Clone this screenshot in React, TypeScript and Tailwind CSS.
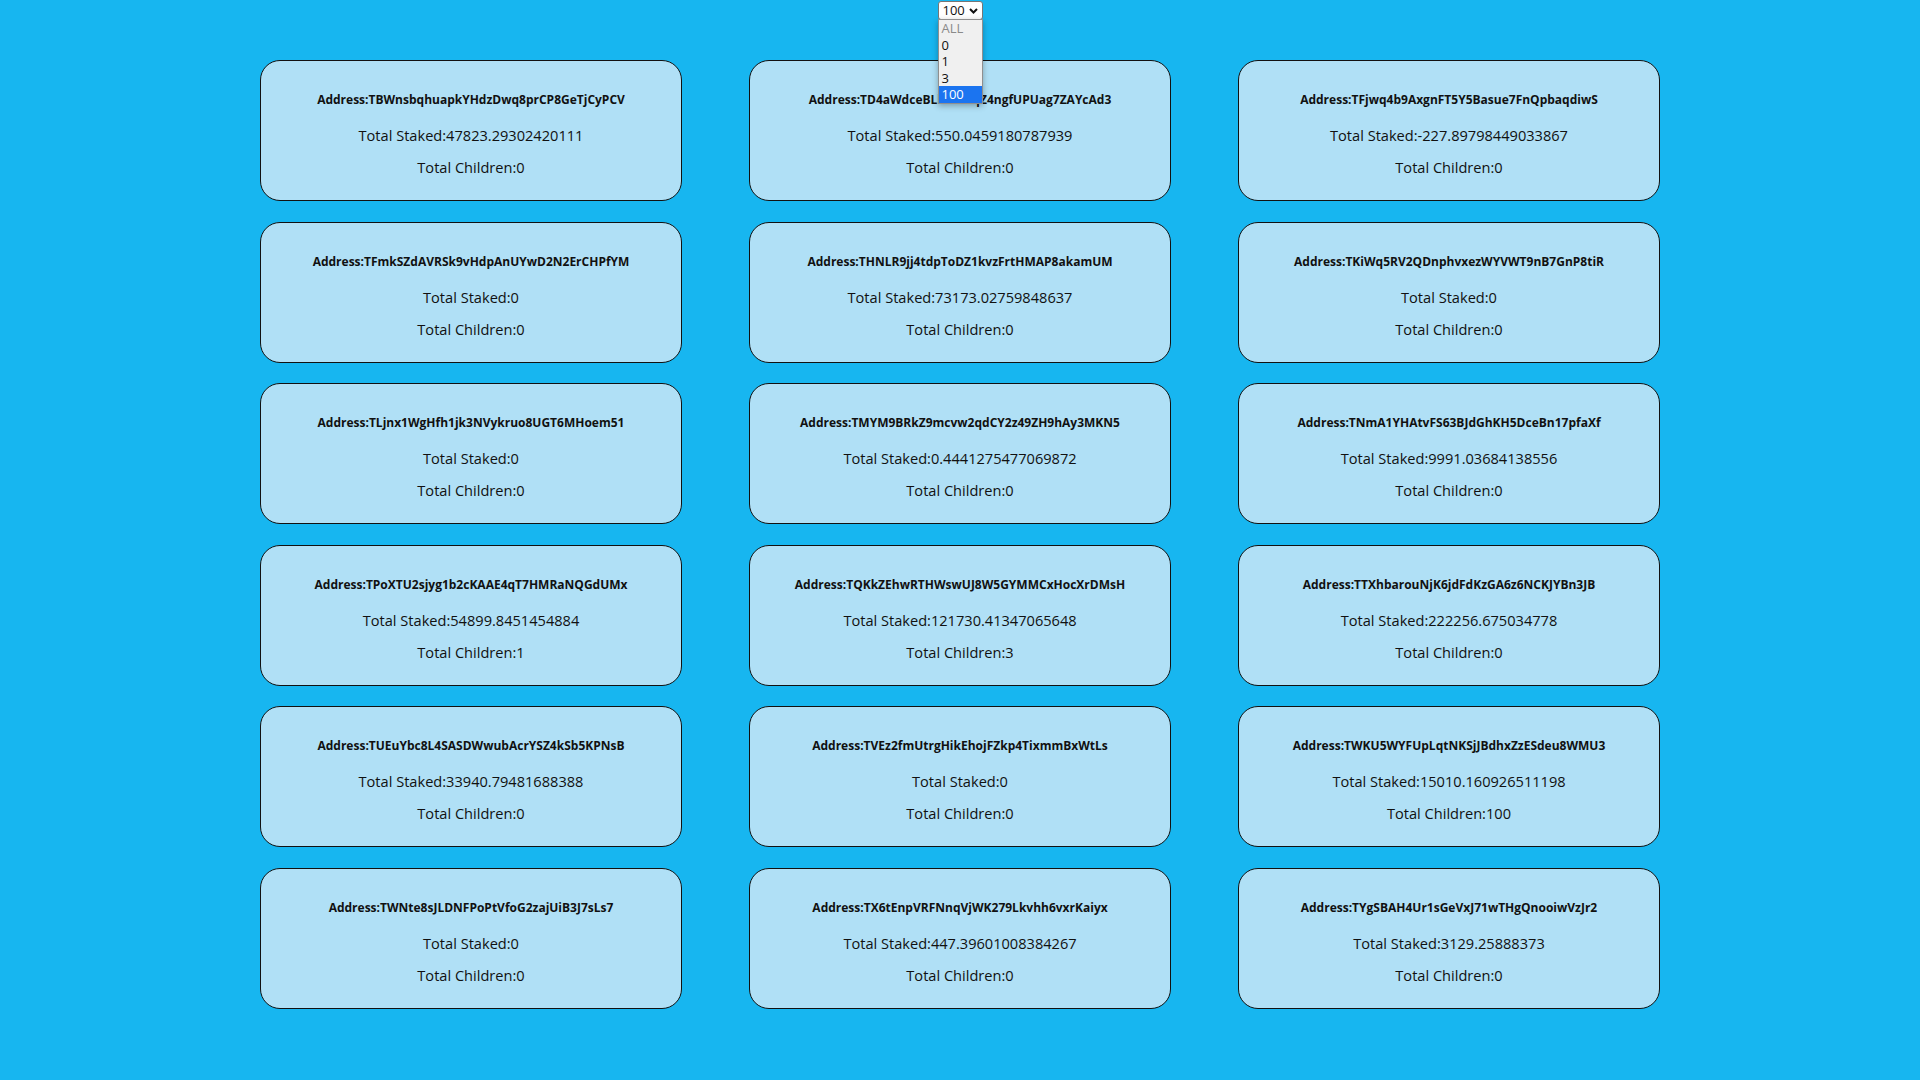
import { useState } from 'react';

interface Staker {
  address: string;
  staked: string;
  children: number;
}

const stakers: Staker[] = [
  { address: 'TBWnsbqhuapkYHdzDwq8prCP8GeTjCyPCV', staked: '47823.29302420111', children: 0 },
  { address: 'TD4aWdceBLk7Rs2qZ4ngfUPUag7ZAYcAd3', staked: '550.0459180787939', children: 0 },
  { address: 'TFjwq4b9AxgnFT5Y5Basue7FnQpbaqdiwS', staked: '-227.89798449033867', children: 0 },
  { address: 'TFmkSZdAVRSk9vHdpAnUYwD2N2ErCHPfYM', staked: '0', children: 0 },
  { address: 'THNLR9jj4tdpToDZ1kvzFrtHMAP8akamUM', staked: '73173.02759848637', children: 0 },
  { address: 'TKiWq5RV2QDnphvxezWYVWT9nB7GnP8tiR', staked: '0', children: 0 },
  { address: 'TLjnx1WgHfh1jk3NVykruo8UGT6MHoem51', staked: '0', children: 0 },
  { address: 'TMYM9BRkZ9mcvw2qdCY2z49ZH9hAy3MKN5', staked: '0.4441275477069872', children: 0 },
  { address: 'TNmA1YHAtvFS63BJdGhKH5DceBn17pfaXf', staked: '9991.03684138556', children: 0 },
  { address: 'TPoXTU2sjyg1b2cKAAE4qT7HMRaNQGdUMx', staked: '54899.8451454884', children: 1 },
  { address: 'TQKkZEhwRTHWswUJ8W5GYMMCxHocXrDMsH', staked: '121730.41347065648', children: 3 },
  { address: 'TTXhbarouNjK6jdFdKzGA6z6NCKJYBn3JB', staked: '222256.675034778', children: 0 },
  { address: 'TUEuYbc8L4SASDWwubAcrYSZ4kSb5KPNsB', staked: '33940.79481688388', children: 0 },
  { address: 'TVEz2fmUtrgHikEhojFZkp4TixmmBxWtLs', staked: '0', children: 0 },
  { address: 'TWKU5WYFUpLqtNKSjJBdhxZzESdeu8WMU3', staked: '15010.160926511198', children: 100 },
  { address: 'TWNte8sJLDNFPoPtVfoG2zajUiB3J7sLs7', staked: '0', children: 0 },
  { address: 'TX6tEnpVRFNnqVjWK279Lkvhh6vxrKaiyx', staked: '447.39601008384267', children: 0 },
  { address: 'TYgSBAH4Ur1sGeVxJ71wTHgQnooiwVzJr2', staked: '3129.25888373', children: 0 },
];

const options = ['ALL', '0', '1', '3', '100'];

function StakerCard({ staker }: { staker: Staker }) {
  return (
    <div className="h-[141px] rounded-[20px] border border-[#111] bg-[#b0e0f6] flex flex-col items-center text-center">
      <h4 className="mt-[31px] text-[12px] leading-4 font-bold">Address:{staker.address}</h4>
      <p className="mt-[16px] text-[14.6px] leading-[22px]">Total Staked:{staker.staked}</p>
      <p className="mt-[10px] text-[14.6px] leading-[22px]">Total Children:{staker.children}</p>
    </div>
  );
}

export default function App() {
  const [selected] = useState('100');

  return (
    <div className="min-h-screen bg-[#17b6f0] text-[#111] font-['Open_Sans',sans-serif]">
      <div className="flex justify-center pt-px">
        <div className="relative">
          {/* closed select box */}
          <div className="w-[45px] h-[19px] flex items-center justify-between pl-[4px] pr-[3px] bg-white border border-[#767676] rounded-[3px] text-[13px] leading-none">
            <span>{selected}</span>
            <svg width="9" height="6" viewBox="0 0 9 6" className="mr-px">
              <path d="M1 1 L4.5 4.5 L8 1" fill="none" stroke="#111" strokeWidth="2" />
            </svg>
          </div>

          {/* open option list */}
          <ul className="absolute left-0 top-[18px] w-[45px] bg-[#f0f0f0] border border-[#8f8f8f] shadow-[0_2px_6px_rgba(0,0,0,0.3)] text-[13px] z-10">
            {options.map((opt) => (
              <li
                key={opt}
                className={`h-[16.5px] pl-[3px] leading-[16.5px] ${
                  opt === selected
                    ? 'bg-[#1b74f0] text-white'
                    : opt === 'ALL'
                    ? 'text-[#8a8a8a]'
                    : 'text-[#111]'
                }`}
              >
                {opt}
              </li>
            ))}
          </ul>
        </div>
      </div>

      <div className="mt-[40px] grid grid-cols-[repeat(3,422px)] justify-center gap-x-[67px] gap-y-[20.5px] pb-10">
        {stakers.map((s) => (
          <StakerCard key={s.address} staker={s} />
        ))}
      </div>
    </div>
  );
}
